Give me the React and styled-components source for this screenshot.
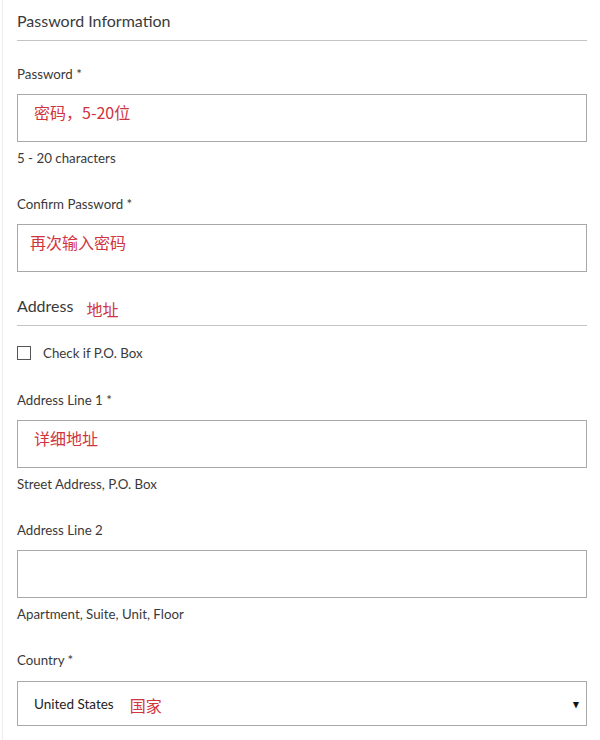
import React from "react";
import styled, { createGlobalStyle } from "styled-components";

const GlobalStyle = createGlobalStyle`
  html, body {
    margin: 0;
    padding: 0;
    background: #ffffff;
  }
  body {
    font-family: Lato, "Noto Sans", "Noto Sans CJK SC", sans-serif;
    color: #333333;
  }
`;

function Field({ label, hint, placeholder, indent, top = 30 }) {
  return (
    <FieldBlock $top={top}>
      <Label>{label}</Label>
      <InputBox>
        <Placeholder $indent={indent}>{placeholder}</Placeholder>
      </InputBox>
      {hint && <Hint>{hint}</Hint>}
    </FieldBlock>
  );
}

export default function App() {
  return (
    <>
      <GlobalStyle />
      <Page>
        <SectionTitle $height={41}>
          <span>Password Information</span>
        </SectionTitle>

        <Field top={25} label="Password *" placeholder="密码，5-20位" indent={17} hint="5 - 20 characters" />
        <Field label="Confirm Password *" placeholder="再次输入密码" indent={13} />

        <SectionTitle $height={54}>
          <span>Address</span>
          <Note>地址</Note>
        </SectionTitle>

        <CheckRow>
          <CheckBox />
          <span>Check if P.O. Box</span>
        </CheckRow>

        <Field top={31} label="Address Line 1 *" placeholder="详细地址" indent={17} hint="Street Address, P.O. Box" />
        <Field label="Address Line 2" placeholder="" hint="Apartment, Suite, Unit, Floor" />

        <FieldBlock $top={30}>
          <Label>Country *</Label>
          <SelectBox>
            <SelectValue>United States</SelectValue>
            <Note>国家</Note>
            <Arrow>▼</Arrow>
          </SelectBox>
        </FieldBlock>
      </Page>
    </>
  );
}

const Page = styled.div`
  width: 570px;
  margin-left: 2px;
  padding: 0 13px 0 14px;
  border-left: 1px solid #ededed;
  min-height: 740px;
`;

const SectionTitle = styled.div`
  display: flex;
  align-items: flex-end;
  gap: 13px;
  height: ${(p) => p.$height}px;
  border-bottom: 1px solid #c4c4c4;
  box-sizing: border-box;
  padding-bottom: 11px;
  font-size: 16px;
  color: #3a3a3a;
  line-height: 1;
`;

const Note = styled.span`
  font-family: "Noto Sans CJK SC", sans-serif;
  font-size: 16px;
  color: #d0343f;
  line-height: 1;
  margin-bottom: -3px;
`;

const FieldBlock = styled.div`
  display: flex;
  flex-direction: column;
  padding-top: ${(p) => p.$top}px;
`;

const Label = styled.div`
  font-size: 13.3px;
  line-height: 16px;
  color: #3a3a3a;
  margin-bottom: 12px;
`;

const InputBox = styled.div`
  height: 48px;
  border: 1px solid #a8a8a8;
  box-sizing: border-box;
  display: flex;
  align-items: flex-start;
`;

const Placeholder = styled.span`
  font-family: "Noto Sans CJK SC", sans-serif;
  font-size: 16px;
  line-height: 18px;
  color: #d0343f;
  margin-top: 8px;
  padding-left: ${(p) => (p.$indent || 16) - 1}px;
`;

const Hint = styled.div`
  font-size: 13.3px;
  line-height: 16px;
  color: #3a3a3a;
  margin-top: 8px;
`;

const CheckRow = styled.label`
  display: flex;
  align-items: center;
  gap: 12px;
  height: 16px;
  margin-top: 19px;
  font-size: 13.3px;
  color: #3a3a3a;
`;

const CheckBox = styled.span`
  width: 12px;
  height: 12px;
  border: 1px solid #555;
  display: inline-block;
`;

const SelectBox = styled.div`
  position: relative;
  height: 45px;
  margin-top: 1px;
  border: 1px solid #a8a8a8;
  box-sizing: border-box;
  display: flex;
  align-items: center;
  gap: 16px;
  padding-left: 16px;
`;

const SelectValue = styled.span`
  font-size: 13.5px;
  color: #222;
`;

const Arrow = styled.span`
  position: absolute;
  right: 6px;
  top: 50%;
  transform: translateY(-50%) scaleX(0.8);
  font-size: 8px;
  color: #111;
`;
